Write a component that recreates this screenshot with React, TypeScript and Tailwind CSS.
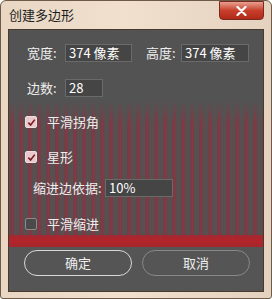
import React from 'react'

const font = { fontFamily: '"Noto Sans CJK SC", "Liberation Sans", sans-serif' }

function Check({ checked }: { checked?: boolean }) {
  return (
    <span
      className={`w-[12px] h-[12px] rounded-[2px] border flex items-center justify-center ${
        checked ? 'bg-[#e9c9cc] border-[#f0dede]' : 'bg-[#4a4a4a] border-[#8a8a8a]'
      }`}
    >
      {checked && (
        <svg width="9" height="9" viewBox="0 0 10 10">
          <path d="M1.5 5.2 L4 7.8 L8.6 1.8" fill="none" stroke="#7a1a24" strokeWidth="1.8" />
        </svg>
      )}
    </span>
  )
}

function Field({ value, w }: { value: string; w: string }) {
  return (
    <div className={`${w} h-[18px] bg-[#454545] border border-[#6a6a6a] text-[13px] text-white leading-[16px] pl-[3px]`}>
      {value}
    </div>
  )
}

export default function App() {
  return (
    <div className="w-[272px] h-[299px] bg-[#ffffff]" style={font}>
      <div className="w-[272px] h-[299px] rounded-t-[6px] rounded-b-[3px] border border-[#6e5a48] bg-[linear-gradient(90deg,#e9d7c4,#f0e0cd_45%,#e4d2bf)] flex flex-col">
        <div className="h-[28px] flex items-start justify-between">
          <div className="pl-[8px] pt-[5px] text-[13px] text-[#1e1e1e] leading-[18px]">创建多边形</div>
          <div className="mr-[7px] w-[45px] h-[19px] rounded-b-[4px] border border-[#7a2a20] bg-[linear-gradient(180deg,#e8a090,#c8402c_50%,#b02a18)] flex items-center justify-center">
            <svg width="11" height="10" viewBox="0 0 11 10">
              <path d="M1.5 1 L9.5 9 M9.5 1 L1.5 9" stroke="#ffffff" strokeWidth="2.2" strokeLinecap="round" />
            </svg>
          </div>
        </div>
        <div className="mx-[7px] mb-[6px] flex-1 bg-[#535353] border border-[#4a3a2e] flex flex-col text-[#eeeeee] text-[13px] leading-[18px]">
          <div className="pt-[14px] pl-[18px] flex items-center">
            <span className="w-[38px]">宽度:</span>
            <Field value="374 像素" w="w-[67px]" />
            <span className="ml-[14px] w-[35px]">高度:</span>
            <Field value="374 像素" w="w-[68px]" />
          </div>
          <div className="pt-[17px] pl-[18px] flex items-center">
            <span className="w-[38px]">边数:</span>
            <Field value="28" w="w-[38px]" />
          </div>
          <div className="mt-[4px] flex flex-col bg-[linear-gradient(180deg,#535353_0px,rgba(83,83,83,0)_22px),repeating-linear-gradient(90deg,#545454_0px,#6e3e46_2px,#913442_3px,#6a4248_5px,#545454_6px,#5a4c4e_8px,#545454_9px)]">
            <div className="pt-[12px] pl-[16px] flex items-center gap-[10px]">
              <Check checked />
              <span>平滑拐角</span>
            </div>
            <div className="pt-[17px] pl-[16px] flex items-center gap-[10px]">
              <Check checked />
              <span>星形</span>
            </div>
            <div className="pt-[13px] pl-[24px] flex items-center">
              <span className="w-[72px]">缩进边依据:</span>
              <Field value="10%" w="w-[68px]" />
            </div>
            <div className="pt-[18px] pl-[16px] flex items-center gap-[10px]">
              <Check />
              <span>平滑缩进</span>
            </div>
            <div className="mt-[2px] h-[12px] bg-[linear-gradient(180deg,#a02a34,#b3242a_40%,#a5262c)]" />
          </div>
          <div className="flex-1 bg-[#555555] flex items-start gap-[10px] pl-[15px] pt-[3px]">
            <div className="w-[108px] h-[26px] rounded-full border border-[#d8d8d8] flex items-center justify-center text-[13px]">确定</div>
            <div className="w-[108px] h-[26px] rounded-full border border-[#888888] flex items-center justify-center text-[13px]">取消</div>
          </div>
        </div>
      </div>
    </div>
  )
}
